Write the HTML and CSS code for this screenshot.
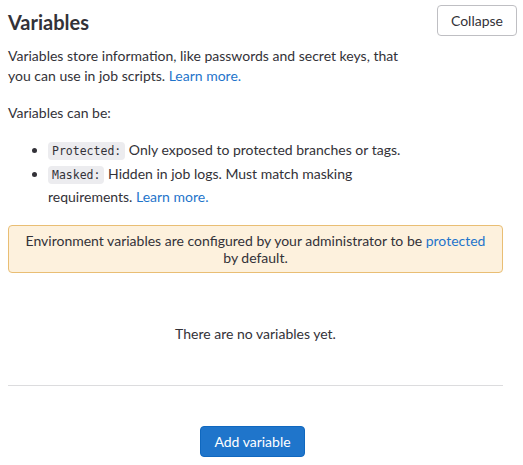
FILE: index.html
```html
<!DOCTYPE html>
<html>
<head>
<meta charset="utf-8">
<link rel="stylesheet" href="styles.css">
</head>
<body>
<section class="settings">
  <header class="settings-header">
    <h4 class="title">Variables</h4>
    <button class="btn">Collapse</button>
  </header>
  <div class="content">
    <p class="intro">Variables store information, like passwords and secret keys, that<br>you can use in job scripts. <a href="#">Learn more.</a></p>
    <p class="can-be">Variables can be:</p>
    <ul class="list">
      <li><code>Protected:</code> Only exposed to protected branches or tags.</li>
      <li><code>Masked:</code> Hidden in job logs. Must match masking<br>requirements. <a href="#">Learn more.</a></li>
    </ul>
    <div class="alert">Environment variables are configured by your administrator to be <a href="#">protected</a><br>by default.</div>
    <p class="empty">There are no variables yet.</p>
    <hr class="sep">
    <div class="actions"><button class="btn btn-primary">Add variable</button></div>
  </div>
</section>
</body>
</html>
```
FILE: styles.css
```css
body {
  margin: 0;
  padding: 5px 7px 0 8px;
  font-family: Lato, "Liberation Sans", sans-serif;
  font-size: 14px;
  color: #333238;
  background: #fff;
}
a { color: #1f75cb; text-decoration: none; }
.settings-header {
  display: flex;
  justify-content: space-between;
  align-items: flex-start;
  margin-right: -1px;
}
.title {
  margin: 5px 0 0;
  font-size: 20px;
  font-weight: 700;
  line-height: 24px;
  color: #333238;
}
.btn {
  font-family: inherit;
  font-size: 14px;
  height: 31px;
  padding: 0 13px;
  border: 1px solid #bfbfc3;
  border-radius: 4px;
  background: #fff;
  color: #333238;
}
.content { width: 495px; }
.intro { margin: 10px 0 0; line-height: 20px; }
.can-be { margin: 17px 0 0; line-height: 20px; }
.list { margin: 16px 0 0; padding-left: 40px; line-height: 21px; }
.list li { margin-bottom: 1px; }
code {
  font-family: "DejaVu Sans Mono", monospace;
  font-size: 11.5px;
  background: #ececef;
  border-radius: 4px;
  padding: 2px 4px;
  color: #333238;
}
.alert {
  margin-top: 18px;
  border: 1px solid #e9be74;
  background: #fdf1dd;
  border-radius: 4px;
  text-align: center;
  padding: 6px 12px;
  line-height: 17px;
}
.empty { margin: 51px 0 0; text-align: center; line-height: 20px; }
.sep { margin: 41px 0 0; border: 0; border-top: 1px solid #dcdcde; }
.actions { display: flex; justify-content: center; padding-top: 40px; margin-right: 6px; }
.btn-primary {
  background: #1f75cb;
  border-color: #1068bf;
  color: #fff;
}
```
